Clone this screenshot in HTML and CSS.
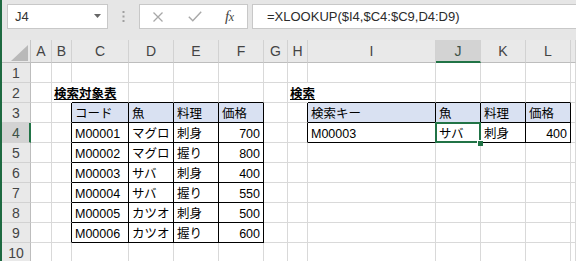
FILE: index.html
```html
<!DOCTYPE html>
<html lang="ja">
<head>
<meta charset="utf-8">
<link rel="stylesheet" href="styles.css">
</head>
<body>
<div class="app">
  <div class="fbar">
    <div class="namebox"><span>J4</span><svg class="dd" width="7" height="4" viewBox="0 0 7 4"><path d="M0 0H7L3.5 4Z" fill="#666"/></svg></div>
    <div class="grip"><svg width="3" height="11" viewBox="0 0 3 11"><rect x="0.5" y="0" width="2" height="2" fill="#a0a0a0"/><rect x="0.5" y="4.5" width="2" height="2" fill="#a0a0a0"/><rect x="0.5" y="9" width="2" height="2" fill="#a0a0a0"/></svg></div>
    <div class="fxbox">
      <svg class="ic-x" width="10" height="10" viewBox="0 0 10 10"><path d="M0.5 0.5L9.5 9.5M9.5 0.5L0.5 9.5" stroke="#a8a8a8" stroke-width="1.3" fill="none"/></svg>
      <svg class="ic-ok" width="14" height="11" viewBox="0 0 14 11"><path d="M0.8 5.8L4.8 9.8L13.2 0.8" stroke="#a8a8a8" stroke-width="1.4" fill="none"/></svg>
      <span class="fx">f<span class="fxs">x</span></span>
    </div>
    <div class="formula">=XLOOKUP($I4,$C4:$C9,D4:D9)</div>
  </div>
  <div class="sheet">
    <!-- header row -->
    <div class="corner"><svg width="17" height="16" viewBox="0 0 17 16"><path d="M17 0V16H0Z" fill="#b9b9b9"/></svg></div>
    <div class="ch">A</div><div class="ch">B</div><div class="ch">C</div><div class="ch">D</div><div class="ch">E</div><div class="ch">F</div><div class="ch">G</div><div class="ch">H</div><div class="ch">I</div><div class="ch chs">J</div><div class="ch">K</div><div class="ch">L</div><div class="ch"></div>
    <!-- row 1 -->
    <div class="rh">1</div>
    <div class="c"></div><div class="c"></div><div class="c"></div><div class="c"></div><div class="c"></div><div class="c"></div><div class="c"></div><div class="c"></div><div class="c"></div><div class="c"></div><div class="c"></div><div class="c"></div><div class="c"></div>
    <!-- row 2 -->
    <div class="rh">2</div>
    <div class="c"></div><div class="c title nr">検索対象表</div><div class="c bb"></div><div class="c bb"></div><div class="c bb"></div><div class="c bb"></div><div class="c"></div><div class="c title nr">検索</div><div class="c bb"></div><div class="c bb"></div><div class="c bb"></div><div class="c bb"></div><div class="c"></div>
    <!-- row 3 -->
    <div class="rh">3</div>
    <div class="c"></div><div class="c br"></div><div class="c t th">コード</div><div class="c t th">魚</div><div class="c t th">料理</div><div class="c t th">価格</div><div class="c"></div><div class="c br"></div><div class="c t th">検索キー</div><div class="c t th">魚</div><div class="c t th">料理</div><div class="c t th">価格</div><div class="c"></div>
    <!-- row 4 -->
    <div class="rh rhs">4</div>
    <div class="c"></div><div class="c br"></div><div class="c t">M00001</div><div class="c t">マグロ</div><div class="c t">刺身</div><div class="c t num">700</div><div class="c"></div><div class="c br"></div><div class="c t">M00003</div><div class="c t sel">サバ</div><div class="c t">刺身</div><div class="c t num">400</div><div class="c"></div>
    <!-- row 5 -->
    <div class="rh">5</div>
    <div class="c"></div><div class="c br"></div><div class="c t">M00002</div><div class="c t">マグロ</div><div class="c t">握り</div><div class="c t num">800</div><div class="c"></div><div class="c"></div><div class="c"></div><div class="c"></div><div class="c"></div><div class="c"></div><div class="c"></div>
    <!-- row 6 -->
    <div class="rh">6</div>
    <div class="c"></div><div class="c br"></div><div class="c t">M00003</div><div class="c t">サバ</div><div class="c t">刺身</div><div class="c t num">400</div><div class="c"></div><div class="c"></div><div class="c"></div><div class="c"></div><div class="c"></div><div class="c"></div><div class="c"></div>
    <!-- row 7 -->
    <div class="rh">7</div>
    <div class="c"></div><div class="c br"></div><div class="c t">M00004</div><div class="c t">サバ</div><div class="c t">握り</div><div class="c t num">550</div><div class="c"></div><div class="c"></div><div class="c"></div><div class="c"></div><div class="c"></div><div class="c"></div><div class="c"></div>
    <!-- row 8 -->
    <div class="rh">8</div>
    <div class="c"></div><div class="c br"></div><div class="c t">M00005</div><div class="c t">カツオ</div><div class="c t">刺身</div><div class="c t num">500</div><div class="c"></div><div class="c"></div><div class="c"></div><div class="c"></div><div class="c"></div><div class="c"></div><div class="c"></div>
    <!-- row 9 -->
    <div class="rh">9</div>
    <div class="c"></div><div class="c br"></div><div class="c t">M00006</div><div class="c t">カツオ</div><div class="c t">握り</div><div class="c t num">600</div><div class="c"></div><div class="c"></div><div class="c"></div><div class="c"></div><div class="c"></div><div class="c"></div><div class="c"></div>
    <!-- row 10 -->
    <div class="rh">10</div>
    <div class="c"></div><div class="c"></div><div class="c"></div><div class="c"></div><div class="c"></div><div class="c"></div><div class="c"></div><div class="c"></div><div class="c"></div><div class="c"></div><div class="c"></div><div class="c"></div><div class="c"></div>
  </div>
</div>
</body>
</html>
```

FILE: styles.css
```css
html, body {
  margin: 0;
  padding: 0;
  background: #ffffff;
  overflow: hidden;
}

.app {
  width: 576px;
  height: 261px;
  box-sizing: border-box;
  border-left: 2px solid #1e6a41;
  overflow: hidden;
  display: flex;
  flex-direction: column;
}

.fbar {
  height: 40px;
  flex: none;
  box-sizing: border-box;
  background: #e6e6e6;
  display: flex;
  align-items: flex-start;
  padding: 4px 0 0 5px;
  font-family: "Liberation Sans", Arial, sans-serif;
  font-size: 13px;
  color: #333333;
}

.namebox {
  width: 101px;
  height: 25px;
  box-sizing: border-box;
  background: #ffffff;
  border: 1px solid #c8c8c8;
  display: flex;
  align-items: center;
  justify-content: space-between;
  padding: 0 6px 0 7px;
}

.namebox span {
  color: #333333;
}

.dd {
  margin-top: -2px;
}

.grip {
  width: 31px;
  height: 25px;
  display: flex;
  align-items: center;
  justify-content: center;
}

.fxbox {
  width: 109px;
  height: 25px;
  box-sizing: border-box;
  background: #ffffff;
  border: 1px solid #c8c8c8;
  display: flex;
  align-items: center;
  padding-left: 13px;
}

.ic-ok {
  margin-left: 25px;
}

.fx {
  margin-left: 23px;
  font-family: "Liberation Serif", "Times New Roman", serif;
  font-style: italic;
  font-size: 15px;
  color: #444444;
  letter-spacing: -0.5px;
}

.fxs {
  font-size: 12px;
}

.formula {
  flex: 1;
  height: 25px;
  box-sizing: border-box;
  margin-left: 4px;
  background: #ffffff;
  border: 1px solid #c8c8c8;
  border-right: none;
  display: flex;
  align-items: center;
  padding-left: 14px;
  white-space: nowrap;
  color: #2b2b2b;
}

.sheet {
  flex: 1;
  display: grid;
  grid-template-columns: 29px 21px 20px 57px 45px 45px 45px 24px 20px 128px 45px 45px 45px 1fr;
  grid-template-rows: 23px repeat(10, 20px);
  background: #ffffff;
  font-family: "Liberation Sans", "Noto Sans CJK JP", sans-serif;
  font-size: 12.5px;
  color: #000000;
}

.sheet > div {
  box-sizing: border-box;
  min-width: 0;
}

.corner {
  background: #e9e9e9;
  border-right: 1px solid #c6c6c6;
  border-bottom: 1px solid #bdbdbd;
  display: flex;
  align-items: flex-end;
  justify-content: flex-end;
  padding: 0 2px 1px 0;
}

.ch {
  background: #e9e9e9;
  border-right: 1px solid #d2d2d2;
  border-bottom: 1px solid #bdbdbd;
  display: flex;
  align-items: center;
  justify-content: center;
  font-family: "Liberation Sans", Arial, sans-serif;
  font-size: 14px;
  color: #444444;
}

.chs {
  background: #d3d3d3;
  border-bottom: 2px solid #217346;
  color: #3d5247;
  padding-top: 1px;
}

.rh {
  background: #e9e9e9;
  border-right: 1px solid #bdbdbd;
  border-bottom: 1px solid #d2d2d2;
  display: flex;
  align-items: center;
  justify-content: center;
  font-family: "Liberation Sans", Arial, sans-serif;
  font-size: 14px;
  color: #444444;
}

.rhs {
  background: #d3d3d3;
  border-right: 2px solid #217346;
  color: #3d5247;
  padding-left: 1px;
}

.c {
  border-right: 1px solid #d9d9d9;
  border-bottom: 1px solid #d9d9d9;
  display: flex;
  align-items: flex-end;
  line-height: 15px;
  white-space: nowrap;
}

.t {
  padding-left: 3px;
  padding-right: 3px;
}

.num {
  justify-content: flex-end;
}

.title {
  font-weight: bold;
  text-decoration: underline;
  padding-left: 2px;
  overflow: visible;
  position: relative;
  z-index: 1;
}

.nr {
  border-right-color: transparent;
}

.br {
  border-right-color: #000000;
}

.bb {
  border-bottom-color: #000000;
}

.t.th,
.t:not(.title) {
  border-right-color: #000000;
  border-bottom-color: #000000;
}

.th {
  background: #d9e1f2;
}

.sel {
  position: relative;
}

.sel::before {
  content: "";
  position: absolute;
  top: -1px;
  left: -1px;
  right: -1px;
  bottom: -1px;
  border: 2px solid #217346;
}

.sel::after {
  content: "";
  position: absolute;
  width: 5px;
  height: 5px;
  right: -3px;
  bottom: -4px;
  background: #217346;
  border-left: 1px solid #ffffff;
  border-top: 1px solid #ffffff;
}
```
